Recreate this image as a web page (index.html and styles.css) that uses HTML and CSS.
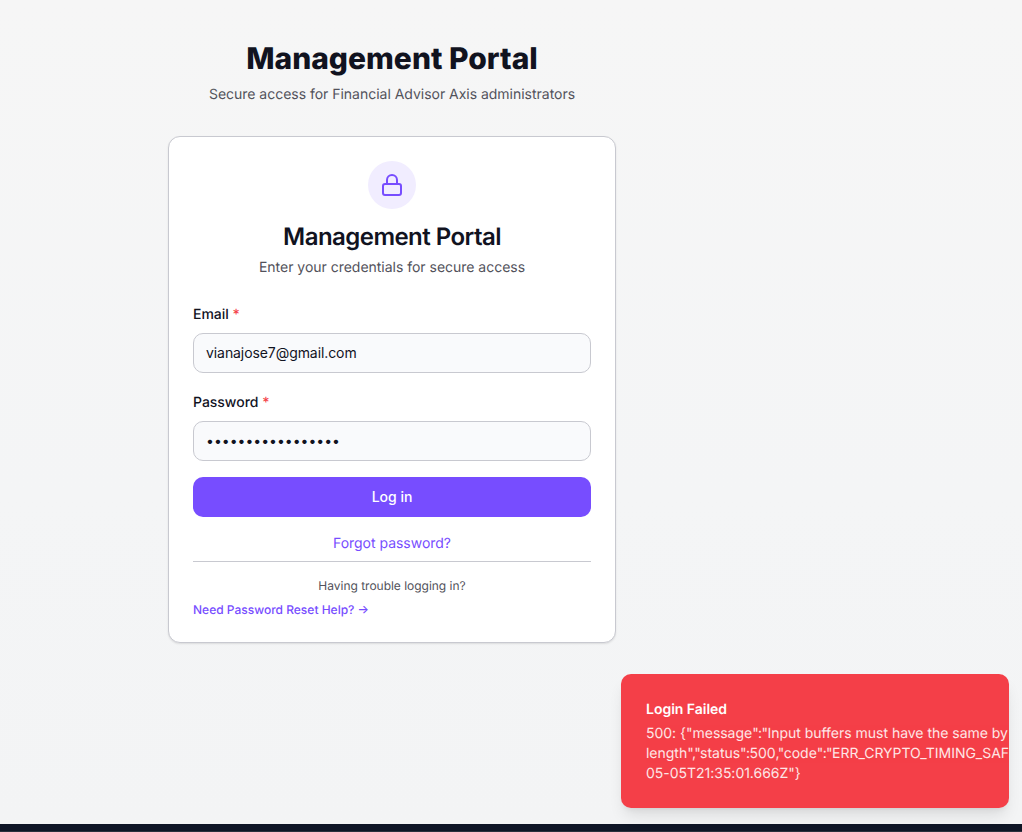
FILE: index.html
```html
<!DOCTYPE html>
<html lang="en">
<head>
<meta charset="utf-8">
<title>Management Portal</title>
<link rel="stylesheet" href="styles.css">
</head>
<body>
<main class="page">
  <div class="column">
    <header class="intro">
      <h1 class="intro-title">Management Portal</h1>
      <p class="intro-text">Secure access for Financial Advisor Axis administrators</p>
    </header>
    <section class="card">
      <div class="badge">
        <svg class="lock" viewBox="0 0 24 24" fill="none" stroke="currentColor" stroke-width="2" stroke-linecap="round" stroke-linejoin="round"><rect width="18" height="11" x="3" y="11" rx="2"/><path d="M7 11V7a5 5 0 0 1 10 0v4"/></svg>
      </div>
      <h2 class="card-title">Management Portal</h2>
      <p class="card-text">Enter your credentials for secure access</p>
      <form class="form">
        <div class="field">
          <label class="label" for="email">Email <span class="required">*</span></label>
          <input class="input" id="email" type="email" value="vianajose7@gmail.com">
        </div>
        <div class="field">
          <label class="label" for="password">Password <span class="required">*</span></label>
          <input class="input" id="password" type="password" value="aaaaaaaaaaaaaaaaa">
        </div>
        <button class="submit" type="button">Log in</button>
      </form>
      <a class="forgot">Forgot password?</a>
      <footer class="help">
        <p class="help-text">Having trouble logging in?</p>
        <a class="help-link">Need Password Reset Help? →</a>
      </footer>
    </section>
  </div>
</main>
<div class="bottom-bar"></div>
<aside class="toast">
  <div class="toast-title">Login Failed</div>
  <div class="toast-text">500: {"message<span class="tight">":"</span>Input buffers must have the same by<br>length<span class="tight">","</span>status<span class="tight">":</span>500<span class="tight">,"</span>code<span class="tight">":"</span>ERR_CRYPTO_TIMING_SAF<br>05-05T21:35:01.666Z"}</div>
</aside>
</body>
</html>
```
FILE: styles.css
```css
* { box-sizing: border-box; }
body {
  margin: 0;
  height: 832px;
  overflow: hidden;
  display: flex;
  flex-direction: column;
  font-family: Inter, sans-serif;
  font-size: 14px;
  line-height: 20px;
  letter-spacing: -0.02px;
  text-rendering: geometricPrecision;
  color: #11131f;
}
h1, h2, p { margin: 0; }
.page {
  flex: 1;
  padding: 41px 0 0 168px;
  background: linear-gradient(180deg, #f6f6f6, #f4f5f6 60%, #f3f4f5);
}
.column { width: 448px; }
.intro { text-align: center; margin-bottom: 31px; }
.intro-title {
  font-size: 30px;
  line-height: 36px;
  font-weight: 800;
  letter-spacing: 0;
  margin-bottom: 8px;
}
.intro-text, .card-text { color: #52525b; }
.card {
  height: 507px;
  padding: 24px;
  background: #fff;
  border: 1px solid #c8c9d0;
  border-radius: 12px;
  box-shadow: 0 1px 2px rgba(0, 0, 0, 0.1);
  display: flex;
  flex-direction: column;
}
.badge {
  width: 48px;
  height: 48px;
  border-radius: 50%;
  background: #f1edff;
  color: #774dff;
  display: grid;
  place-items: center;
  align-self: center;
}
.lock { width: 24px; height: 24px; }
.card-title {
  margin-top: 12px;
  font-size: 24px;
  line-height: 32px;
  font-weight: 600;
  letter-spacing: -0.55px;
  text-align: center;
}
.card-text { margin-top: 5px; text-align: center; }
.form { margin-top: 27px; }
.field { margin-bottom: 20px; }
.field + .field { margin-bottom: 16px; }
.label { display: block; font-weight: 500; margin-bottom: 8px; }
.required { color: #f43f48; }
.input {
  display: block;
  width: 100%;
  height: 40px;
  padding: 0 12px 1px;
  border: 1px solid #c8c9d0;
  border-radius: 10px;
  background: #f9fafc;
  color: inherit;
  font: inherit;
  letter-spacing: 0;
}
.input[type="email"] { letter-spacing: -0.08px; }
.submit {
  display: block;
  width: 100%;
  height: 40px;
  border: 0;
  border-radius: 10px;
  background: #774dff;
  color: #fff;
  font: 500 14px/20px Inter, sans-serif;
  letter-spacing: inherit;
}
.forgot { margin-top: 17px; text-align: center; color: #774dff; }
.help {
  margin-top: 7px;
  padding-top: 16px;
  border-top: 1px solid #c8c9d0;
  font-size: 12px;
  line-height: 16px;
}
.help-text { text-align: center; color: #52525b; }
.help-link { display: block; margin-top: 8px; font-weight: 500; letter-spacing: 0; color: #774dff; }
.bottom-bar {
  height: 8px;
  background: #0f1626;
  border-bottom: 1px solid #2b303d;
}
.toast {
  position: absolute;
  left: 621px;
  top: 674px;
  width: 388px;
  height: 134px;
  padding: 26px 0 0 25px;
  overflow: hidden;
  border-radius: 10px;
  background: #f43f48;
  color: #fff;
  box-shadow: 0 10px 15px -3px rgba(0, 0, 0, 0.1), 0 4px 6px -4px rgba(0, 0, 0, 0.1);
}
.toast-title { font-weight: 600; margin-bottom: 4px; }
.toast-text { white-space: nowrap; opacity: 0.87; }
.tight { letter-spacing: -0.62px; }
```
